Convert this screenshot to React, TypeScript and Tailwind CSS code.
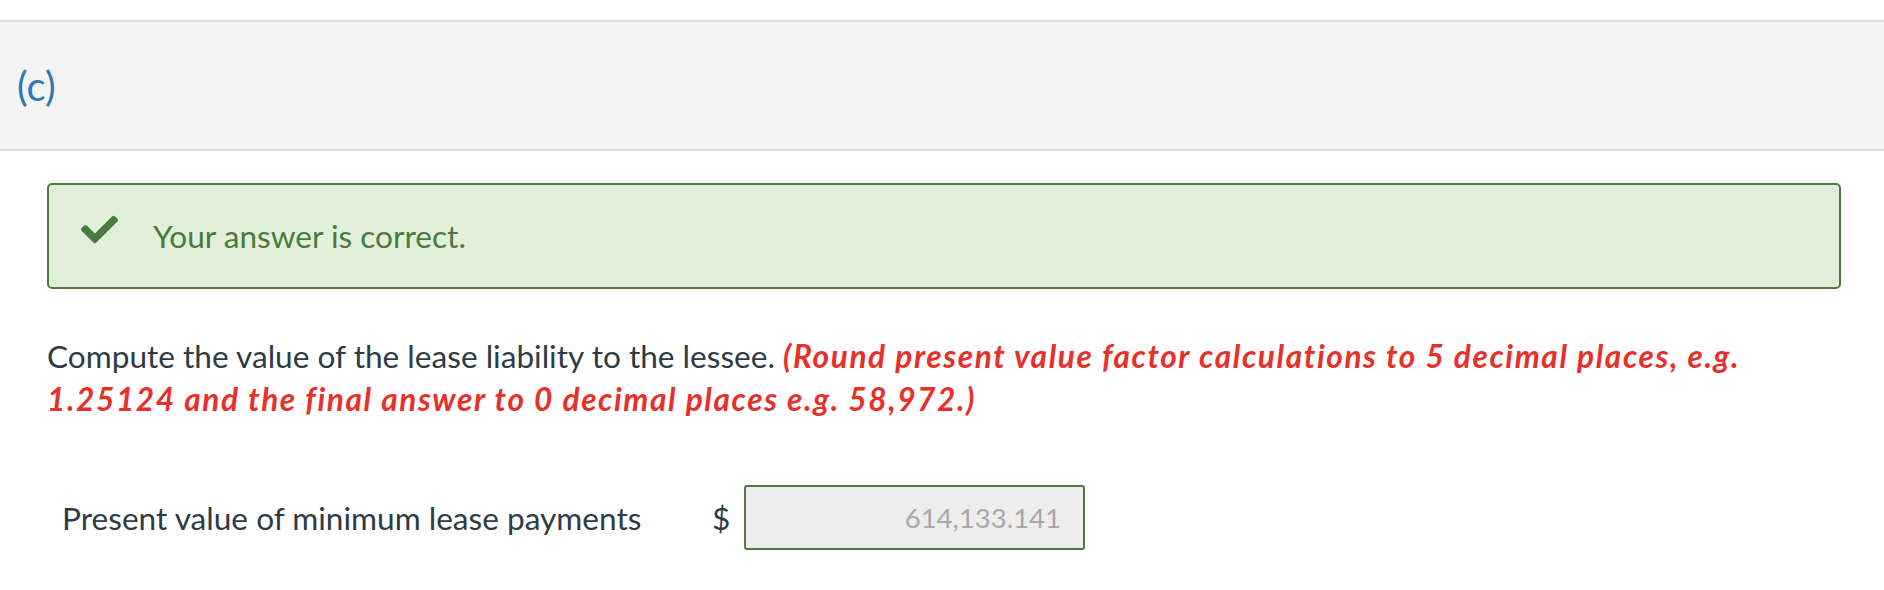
import React from "react";
import { FaCheck } from "react-icons/fa";

export default function App() {
  return (
    <div className="w-[1884px] h-[590px] bg-white overflow-hidden" style={{ fontFamily: "Lato, 'Open Sans', sans-serif" }}>
      <div className="h-[20px]" />
      <div className="h-[131px] bg-[#f4f4f4] border-t-2 border-b-2 border-[#dedede] flex items-center pl-[17px]">
        <span className="text-[#2d7bb6] text-[40px] leading-none">(c)</span>
      </div>
      <div className="pl-[47px] pr-[43px]">
        <div className="mt-[32px] h-[106px] rounded-[5px] border-2 border-[#4e7b40] bg-[#e2efdb] flex items-center pl-[32px]">
          <FaCheck className="text-[#4a7a3d] w-[37px] h-[37px] mb-[13px] shrink-0" />
          <span className="ml-[35px] text-[31.6px] leading-[40px] text-[#4a7a3d]">Your answer is correct.</span>
        </div>
        <p className="mt-[46px] text-[31.6px] leading-[43px] text-[#2d3b45]">
          Compute the value of the lease liability to the lessee.{" "}
          <span className="font-bold italic text-[#e8302a] tracking-[1.6px]">
            (Round present value factor calculations to 5 decimal places, e.g. 1.25124 and the final answer to 0 decimal places e.g. 58,972.)
          </span>
        </p>
        <div className="mt-[64px] flex items-center pl-[15px]">
          <span className="w-[650px] text-[31.6px] leading-[40px] text-[#2d3b45]">Present value of minimum lease payments</span>
          <span className="text-[31.6px] leading-[40px] text-[#2d3b45] w-[32px]">$</span>
          <div className="w-[341px] h-[65px] rounded-[3px] border-2 border-[#4e7b40] bg-[#ededed] flex items-center justify-end pr-[22px]">
            <span className="text-[27.5px] leading-[40px] text-[#a8a8a8]">614,133.141</span>
          </div>
        </div>
      </div>
    </div>
  );
}
